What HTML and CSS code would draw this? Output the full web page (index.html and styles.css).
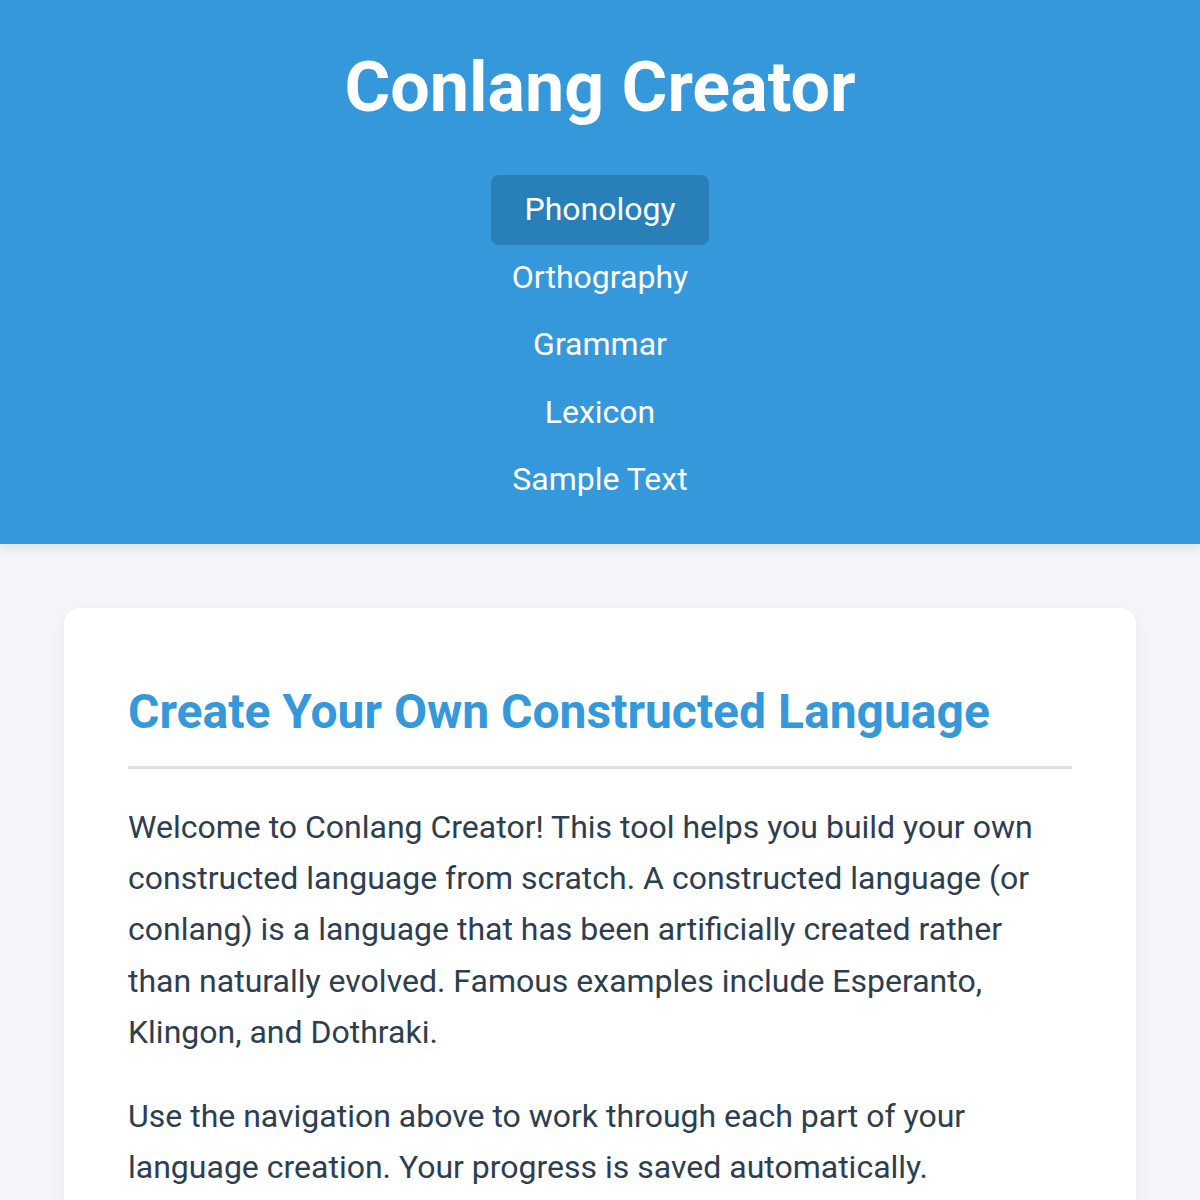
FILE: index.html
```html
<!DOCTYPE html>
<html lang="en">
<head>
<meta charset="utf-8">
<title>Conlang Creator</title>
<link rel="stylesheet" href="styles.css">
</head>
<body>
<header class="site-header">
  <h1 class="site-title">Conlang Creator</h1>
  <nav class="main-nav">
    <a class="nav-link active" href="#">Phonology</a>
    <a class="nav-link" href="#">Orthography</a>
    <a class="nav-link" href="#">Grammar</a>
    <a class="nav-link" href="#">Lexicon</a>
    <a class="nav-link" href="#">Sample Text</a>
  </nav>
</header>
<main class="content">
  <section class="card">
    <h2 class="card-title">Create Your Own Constructed Language</h2>
    <p class="card-text">Welcome to Conlang Creator! This tool helps you build your own constructed language from scratch. A constructed language (or conlang) is a language that has been artificially created rather than naturally evolved. Famous examples include Esperanto, Klingon, and Dothraki.</p>
    <p class="card-text">Use the navigation above to work through each part of your language creation. Your progress is saved automatically.</p>
  </section>
</main>
</body>
</html>
```
FILE: styles.css
```css
* { box-sizing: border-box; }
html, body { margin: 0; padding: 0; }
body {
  font-family: Roboto, "Liberation Sans", sans-serif;
  background: #f5f6fa;
  color: #2c3e50;
}
.site-header {
  background: #3498db;
  color: #fff;
  padding: 32px 0 30px;
  text-align: center;
  box-shadow: 0 4px 12px rgba(0, 0, 0, 0.1);
  position: relative;
}
.site-title {
  font-size: 70px;
  font-weight: 700;
  margin: 14px 0 48px;
  line-height: 82px;
}
.main-nav {
  display: flex;
  flex-direction: column;
  align-items: center;
}
.nav-link {
  color: #fff;
  text-decoration: none;
  font-size: 32px;
  padding: 15px 33px;
  border-radius: 8px;
  line-height: 37.5px;
}
.nav-link.active {
  background: #2980b9;
  padding-top: 16px;
  padding-bottom: 16px;
  margin: -1px 0 -1px;
}
.content {
  padding: 64px;
}
.card {
  background: #fff;
  border-radius: 16px;
  padding: 64px;
  box-shadow: 0 4px 20px rgba(0, 0, 0, 0.05);
}
.card-title {
  color: #3498db;
  font-size: 48px;
  font-weight: 700;
  margin: 11px 0 33px;
  padding-bottom: 26px;
  border-bottom: 3px solid #e0e0e0;
  line-height: 1.2;
}
.card-text {
  font-size: 32px;
  line-height: 1.6;
  margin: 0 0 33px;
}
```
